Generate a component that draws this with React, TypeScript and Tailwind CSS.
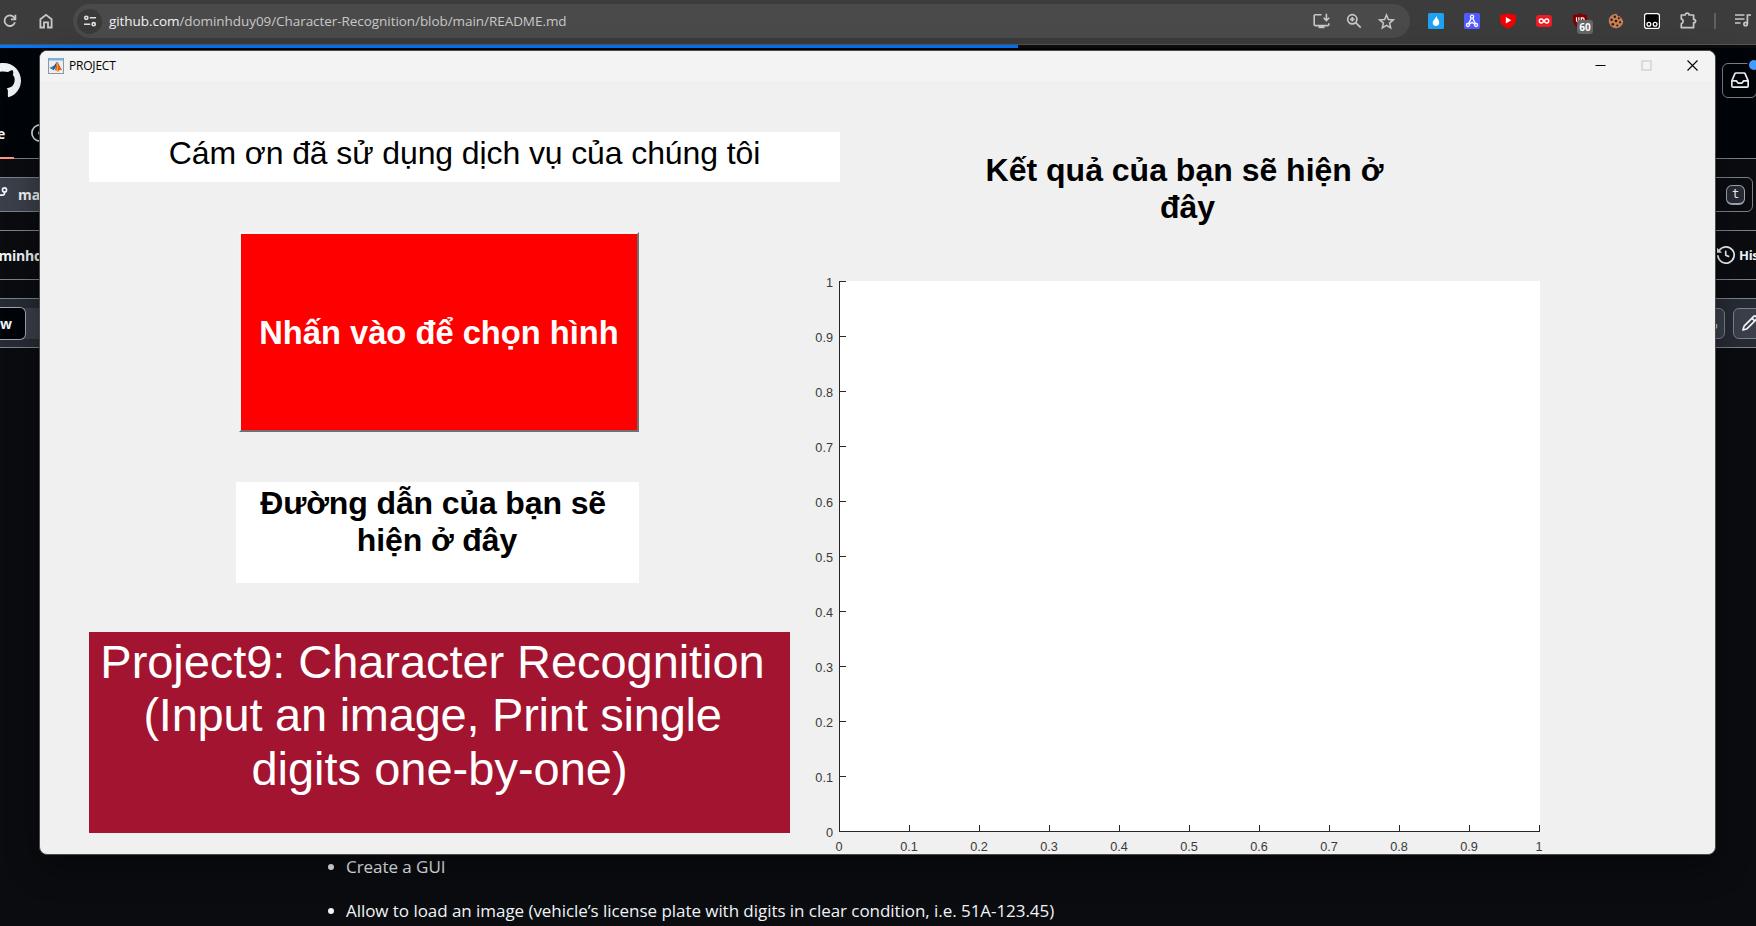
import React from "react";

const ui = "font-['Open_Sans','Noto_Sans',sans-serif]";
const arial = "font-['Liberation_Sans',Arial,sans-serif]";

function BrowserBar() {
  return (
    <header className={`flex h-[45px] items-start border-b border-[#555] bg-[#3c3c3c] text-[#c7c7c7] ${ui}`}>
      <svg className="mt-[13px] ml-[2px] h-4 w-4 shrink-0" viewBox="0 0 16 16" fill="none" stroke="currentColor" strokeWidth="1.8">
        <path d="M12.9 9.2A5.3 5.3 0 1 1 11.8 4.2L13 5.6" />
        <path d="M13.4 1.8v4.5H8.9" />
      </svg>
      <svg className="mt-[13px] ml-[20px] h-4 w-4 shrink-0" viewBox="0 0 16 16" fill="none" stroke="currentColor" strokeWidth="1.8">
        <path d="M2.4 6.2 8 1.8l5.6 4.4v8.3H10V9.4H6v5.1H2.4z" />
      </svg>
      <div className="mt-1 ml-[19px] flex h-[34px] w-[1337px] shrink-0 items-center rounded-full bg-[#4a4a4a] pl-1">
        <div className="flex h-[25px] w-[25px] items-center justify-center rounded-full bg-[#3a3a3a] text-[#e0e0e0]">
          <svg className="h-[14px] w-[14px]" viewBox="0 0 14 14" fill="none" stroke="currentColor" strokeWidth="1.6">
            <circle cx="3.3" cy="3.8" r="1.6" />
            <path d="M6.8 3.8H13M1 10.2h6.2" />
            <circle cx="10.7" cy="10.2" r="1.6" />
          </svg>
        </div>
        <div className="ml-[7px] text-[13.5px] leading-[20px] tracking-[-0.06px] whitespace-nowrap">
          <span className="text-[#f1f1f1]">github.com</span>/dominhduy09/Character-Recognition/blob/main/README.md
        </div>
        <div className="mr-[15px] ml-auto flex items-center gap-[16px]">
          <svg className="h-[17px] w-[17px]" viewBox="0 0 17 17" fill="none" stroke="currentColor" strokeWidth="1.6">
            <path d="M8.5 1.8H2.2a1 1 0 0 0-1 1v8.8a1 1 0 0 0 1 1h12.6a1 1 0 0 0 1-1V10.2" />
            <path d="M13.4.8v6M10.6 4.8l2.8 2.8 2.8-2.8" />
            <rect x="5.5" y="12.5" width="6" height="2.7" fill="currentColor" stroke="none" />
          </svg>
          <svg className="h-[16px] w-[16px]" viewBox="0 0 16 16" fill="none" stroke="currentColor" strokeWidth="1.7">
            <circle cx="6.3" cy="6.3" r="4.6" />
            <path d="m9.7 9.7 5 5M4 6.3h4.6M6.3 4v4.6" />
          </svg>
          <svg className="h-[17px] w-[17px]" viewBox="0 0 17 17" fill="none" stroke="currentColor" strokeWidth="1.5">
            <path d="m8.5 2 1.9 4.5 4.9.4-3.7 3.2 1.1 4.8-4.2-2.6-4.2 2.6 1.1-4.8L1.7 6.9l4.9-.4z" />
          </svg>
        </div>
      </div>
      <div className="mt-[13px] ml-[18px] flex h-4 shrink-0 items-start gap-[20px]">
        <svg className="h-4 w-4" viewBox="0 0 16 16">
          <rect width="16" height="16" rx="1.5" fill="#1da1f2" />
          <path d="M8.3 2.8c.3 2.3 2.9 3.9 2.9 6.8a3.2 3.2 0 0 1-6.5.2C4.7 7 7.9 6 8.3 2.8z" fill="#fff" />
        </svg>
        <svg className="h-4 w-4" viewBox="0 0 16 16" fill="none" stroke="#fff" strokeWidth="1.3">
          <rect width="16" height="16" rx="1.5" fill="#4f5bff" stroke="none" />
          <circle cx="8" cy="3.8" r="1.6" />
          <circle cx="3.9" cy="12" r="1.5" />
          <circle cx="12.1" cy="12" r="1.5" />
          <path d="M7.3 5.2 4.5 10.6M8.7 5.2l2.8 5.4M5.3 11.2 8 9.2l2.7 2" />
        </svg>
        <svg className="h-4 w-4" viewBox="0 0 16 16">
          <path d="M8 .3C5.5 1.5 3 1.7.2 1.7V7c0 4.300 3.800 6.500 7.800 9 4-2.500 7.800-4.700 7.800-9V1.700C13 1.700 10.500 1.500 8 .300z" fill="#f40000" />
          <path d="M5.800 4v6.600L11.300 7.300z" fill="#fff" />
        </svg>
        <svg className="h-4 w-4" viewBox="0 0 16 16" fill="none" stroke="#fff" strokeWidth="1.5">
          <rect y="2" width="16" height="12" rx="3" fill="#ed1c24" stroke="none" />
          <path d="M8 8C6.800 6.300 6.200 6 5.300 6a2 2 0 0 0 0 4C6.200 10 6.800 9.700 8 8s1.800-2 2.700-2a2 2 0 0 1 0 4C9.800 10 9.200 9.700 8 8z" />
        </svg>
        <div className="relative h-4 w-4">
          <svg className="h-4 w-4" viewBox="0 0 16 16">
            <path d="M8 0C6 1.500 4 1.800 1 1.800V7c0 4.500 3 6.500 7 9 4-2.500 7-4.500 7-9V1.800C12 1.800 10 1.500 8 0z" fill="#800000" />
            <path d="M4.500 4.300v3.200a1.200 1.200 0 0 0 2.400 0V4.300M9.300 9.500V4.800h1.300a1.300 1.300 0 0 1 0 3H9.300" fill="none" stroke="#fff" strokeWidth="1.2" />
          </svg>
          <span className="absolute top-[7px] left-[5px] flex h-[14px] w-[16px] items-center justify-center rounded-[3px] bg-[#666] text-[10px] leading-none font-bold text-white">60</span>
        </div>
        <svg className="h-4 w-4" viewBox="0 0 16 16">
          <path d="M8.500.700a7.300 7.300 0 1 0 6.800 7.800c-.6-.3-.6-1-.5-1.800-1-.2-1.300-.9-1-1.900-1.300.3-1.900-.4-1.700-1.500-1.500.3-3-.8-3.600-2.600z" fill="#c87f55" />
          <g fill="#2b1a12">
            <circle cx="6.8" cy="3.8" r="1.2" /><circle cx="3.6" cy="6.8" r="1.2" /><circle cx="8" cy="8" r="1.3" /><circle cx="4.8" cy="11.3" r="1.3" /><circle cx="9.3" cy="12.5" r="1.1" /><circle cx="12" cy="9.3" r="1.1" /><circle cx="10.8" cy="5.2" r="1" />
          </g>
        </svg>
        <svg className="h-4 w-4" viewBox="0 0 16 16">
          <rect x=".6" y=".6" width="14.8" height="14.8" rx="2.2" fill="#000" stroke="#fff" strokeWidth="1.2" />
          <circle cx="4.9" cy="11.3" r="1.9" fill="none" stroke="#fff" strokeWidth="1.3" />
          <circle cx="11.1" cy="11.3" r="1.9" fill="none" stroke="#fff" strokeWidth="1.3" />
        </svg>
        <svg className="-mt-px h-[17px] w-[17px]" viewBox="0 0 17 17" fill="none" stroke="currentColor" strokeWidth="1.7">
          <path d="M1.300 3h3.900c0-2.500 3.900-2.500 3.900 0h4.500v4.300c2.700 0 2.700 3.400 0 3.400v5H1.300v-3.900c2.500-1 2.500-3.900 0-4.900z" strokeLinejoin="round" />
        </svg>
      </div>
      <div className="mt-[13px] ml-[17px] h-4 w-[2px] shrink-0 bg-[#5f5f5f]" />
      <svg className="mt-[12px] ml-[19px] h-4 w-4 shrink-0" viewBox="0 0 16 16" fill="none" stroke="currentColor" strokeWidth="1.7">
        <path d="M0 3h9.500M0 7h9.500M0 11h5.500M12.400 12V3H16" />
        <circle cx="10.6" cy="12" r="1.7" />
      </svg>
    </header>
  );
}

function GithubPage() {
  return (
    <div className={`h-[881px] overflow-hidden bg-[#0a0c10] text-[14px] font-bold text-[#f0f3f6] ${ui}`}>
      <div className="h-[3px] w-[1018px] bg-[#0078ff]" />
      <div className="h-[111px] w-full border-b border-[#7a828e] bg-[#010409]">
        <div className="flex h-[64px] items-center justify-between">
          <svg className="-ml-[14px] h-[35px] w-[35px]" viewBox="0 0 16 16" fill="#f0f3f6">
            <path d="M8 0C3.580 0 0 3.580 0 8c0 3.540 2.290 6.530 5.470 7.590.4.070.550-.170.550-.380 0-.190-.010-.820-.010-1.490-2.010.370-2.530-.490-2.690-.940-.090-.230-.480-.940-.820-1.130-.280-.150-.680-.520-.010-.530.630-.010 1.080.580 1.230.820.720 1.210 1.870.870 2.330.660.070-.520.280-.870.510-1.070-1.780-.200-3.640-.890-3.640-3.950 0-.870.310-1.590.820-2.150-.080-.200-.360-1.020.080-2.120 0 0 .670-.210 2.200.820.640-.180 1.320-.270 2-.270s1.360.090 2 .270c1.530-1.040 2.200-.820 2.200-.820.440 1.100.160 1.920.080 2.120.510.560.820 1.270.820 2.150 0 3.070-1.870 3.750-3.650 3.950.290.250.540.730.540 1.480 0 1.070-.010 1.930-.010 2.200 0 .210.150.460.550.380A8.010 8.010 0 0 0 16 8c0-4.420-3.580-8-8-8z" />
          </svg>
          <div className="relative -mr-[1px] flex h-[35px] w-[35px] items-center justify-center rounded-md border border-[#7a828e]">
            <svg className="h-[18px] w-[18px]" viewBox="0 0 16 16" fill="#f0f3f6">
              <path d="M2.800 2.060A1.750 1.750 0 0 1 4.410 1h7.180c.7 0 1.333.417 1.610 1.060l2.740 6.395c.04.093.06.194.060.295v4.500A1.750 1.750 0 0 1 14.250 15H1.750A1.750 1.750 0 0 1 0 13.250v-4.500c0-.101.020-.202.060-.295Zm1.610.440a.25.25 0 0 0-.23.152L1.887 8H4.750a.75.75 0 0 1 .6.300L6.625 10h2.750l1.275-1.700a.75.75 0 0 1 .6-.300h2.863L11.820 2.652a.25.25 0 0 0-.23-.152Zm10.090 7h-2.875l-1.275 1.700a.75.75 0 0 1-.6.300h-3.500a.75.75 0 0 1-.6-.300L4.375 9.500H1.500v3.750c0 .138.112.25.25.25h12.500a.25.25 0 0 0 .25-.25Z" />
            </svg>
            <span className="absolute -top-[4px] -right-[3px] h-[10px] w-[10px] rounded-full bg-[#409eff] ring-2 ring-[#010409]" />
          </div>
        </div>
        <div className="flex h-[47px] items-stretch">
          <div className="flex w-[14px] items-start border-b-2 border-[#ff967d] pt-[10px] leading-[24px]"><span className="-ml-[3px]">e</span></div>
          <svg className="mt-[12px] ml-[17px] h-[18px] w-[18px]" viewBox="0 0 16 16" fill="none" stroke="#e0e3e6" strokeWidth="1.5">
            <circle cx="8" cy="8" r="7.2" />
            <circle cx="8" cy="8" r="1" fill="#f0f3f6" />
          </svg>
        </div>
      </div>
      <div className="mt-[18px] flex h-[35px] items-center justify-between">
        <div className="flex h-full w-[120px] items-center border-y border-[#7a828e] bg-[#3a3f49]">
          <svg className="-ml-[10px] h-[18px] w-[18px]" viewBox="0 0 16 16" fill="none" stroke="#f0f3f6" strokeWidth="1.5">
            <circle cx="12.9" cy="3.5" r="1.8" />
            <path d="M12.900 5.300v1c0 1-.8 1.800-1.800 1.800H5" />
          </svg>
          <span className="ml-[10px]">main</span>
        </div>
        <div className="mr-[3px] flex h-full w-[200px] items-center justify-end rounded-md border border-[#7a828e] pr-[7px]">
          <kbd className="flex h-[20px] w-[19px] items-center justify-center rounded-md border border-b-2 border-[#9ea7b3] bg-[#272b33] text-[12px] font-normal font-['DejaVu_Sans_Mono',monospace]">t</kbd>
        </div>
      </div>
      <div className="mt-[18px] flex h-[50px] items-center justify-between border-y border-[#7a828e]">
        <span className="-ml-[10px] text-[14px] tracking-[-0.2px]">ominhduy09</span>
        <div className="-mr-[29px] flex items-center gap-[4px]">
          <svg className="h-[18px] w-[18px]" viewBox="0 0 16 16" fill="#f0f3f6">
            <path d="m.427 1.927 1.215 1.215a8.002 8.002 0 1 1-1.600 5.685.75.75 0 1 1 1.493-.154 6.500 6.500 0 1 0 1.180-4.458l1.358 1.358A.25.25 0 0 1 3.896 6H.25A.25.25 0 0 1 0 5.750V2.104a.25.25 0 0 1 .427-.177ZM7.750 4a.75.75 0 0 1 .75.75v2.992l2.028.812a.75.75 0 0 1-.557 1.392l-2.500-1A.751.751 0 0 1 7 8.250v-3.500A.75.75 0 0 1 7.750 4Z" />
          </svg>
          <span className="w-[46px] pt-px text-[13px] tracking-[-0.3px]">History</span>
        </div>
      </div>
      <div className="mt-[18px] flex h-[50px] items-center justify-between border-y border-[#7a828e] bg-[#272b33]">
        <div className="flex h-[31px] w-[100px] items-center bg-[#3a3f49]">
          <div className="-my-px flex h-[33px] w-[26px] items-center rounded-r-md border border-l-0 border-[#9ea7b3] bg-[#010409]">w</div>
        </div>
        <div className="-mr-[11px] flex gap-2">
          <div className="flex h-[31px] w-[35px] items-center justify-end rounded-md border border-[#7a828e] bg-[#3a3f49] pr-[6px]">
            <svg className="h-4 w-4" viewBox="0 0 16 16" fill="none" stroke="#c0c4c8" strokeWidth="1.5"><path d="M2 9v3.200a1 1 0 0 0 1 1h10.500a1 1 0 0 0 1-1V9M8 1v8" /></svg>
          </div>
          <div className="flex h-[31px] w-[34px] items-center justify-center rounded-md border border-[#7a828e] bg-[#3a3f49]">
            <svg className="h-[18px] w-[18px]" viewBox="0 0 16 16" fill="#f0f3f6">
              <path d="M11.013 1.427a1.750 1.750 0 0 1 2.474 0l1.086 1.086a1.750 1.750 0 0 1 0 2.474l-8.610 8.610c-.21.210-.47.364-.756.445l-3.251.930a.75.75 0 0 1-.927-.928l.929-3.250c.081-.286.235-.547.445-.758l8.610-8.610Zm.176 4.823L9.750 4.810l-6.286 6.287a.253.253 0 0 0-.064.108l-.558 1.953 1.953-.558a.253.253 0 0 0 .108-.064Zm1.238-3.763a.25.25 0 0 0-.354 0L10.811 3.750l1.439 1.440 1.263-1.263a.25.25 0 0 0 0-.354Z" />
            </svg>
          </div>
        </div>
      </div>
      <ul className="mt-[505px] ml-[328px] flex flex-col gap-[16px] text-[17px] leading-[28px] font-normal tracking-[-0.05px]">
        <li className="flex items-center gap-[12px]"><span className="h-[6px] w-[6px] rounded-full bg-current" /><span>Create a GUI</span></li>
        <li className="flex items-center gap-[12px]"><span className="h-[6px] w-[6px] rounded-full bg-current" /><span className="whitespace-nowrap">Allow to load an image (vehicle’s license plate with digits in clear condition, i.e. 51A-123.45)</span></li>
      </ul>
    </div>
  );
}

function TitleBar() {
  return (
    <div className={`flex h-[30px] items-center bg-[#f3f3f3] text-black ${ui}`}>
      <svg className="-mt-px ml-[8px] h-4 w-4" viewBox="0 0 16 16">
        <rect x=".5" y=".5" width="15" height="15" fill="#e9eef2" stroke="#8e979e" />
        <rect x="1" y="0" width="14" height="2.5" fill="#7fb0dc" />
        <path d="m1.500 9.800 4-1.800 2 1.600-2.300 2.700z" fill="#3b7bbf" />
        <path d="M5.500 8c1.500-.4 2.300-3.500 3.500-4.200L7.500 9.600 5.200 12.300z" fill="#26507e" />
        <path d="M9 3.800c1.500.2 2.800 5.800 5.300 8.500-1.800-1-3.300-.6-4.300 1.700-.9-1.500-1.700-2-3.400-1.500C8 10.500 8.200 6 9 3.800z" fill="#d9501e" />
        <path d="M9 3.800c-.2 3 .1 7-.7 8.600l1.700 1.600c.7-3 .2-8-1-10.200z" fill="#f5a623" />
      </svg>
      <span className="ml-[5px] text-[12px] tracking-[-0.2px]">PROJECT</span>
      <div className="-mt-[2px] mr-[17px] ml-auto flex items-center gap-[35px]">
        <svg className="h-[11px] w-[11px]" viewBox="0 0 11 11"><rect x=".5" y="5" width="10" height="1" fill="#000" /></svg>
        <svg className="h-[11px] w-[11px]" viewBox="0 0 11 11"><rect x="1" y="1" width="9" height="9" fill="none" stroke="#c4c4c4" /></svg>
        <svg className="h-[11px] w-[11px]" viewBox="0 0 11 11" stroke="#000" strokeWidth="1.1"><path d="m.5.5 10 10M10.5.5l-10 10" /></svg>
      </div>
    </div>
  );
}

const ticks = [0, 1, 2, 3, 4, 5, 6, 7, 8, 9, 10];
const tickLabel = (i: number) => (i === 0 ? "0" : i === 10 ? "1" : `0.${i}`);

function Axes() {
  return (
    <svg className="-ml-[32px] h-[583px] w-[760px] shrink-0" viewBox="808 271 760 583" fontFamily="Liberation Sans, Arial, sans-serif" fontSize="12.7" fill="#3a3a3a">
      <rect x="840" y="281" width="700" height="551" fill="#fff" />
      <g fill="#262626" shapeRendering="crispEdges">
        <rect x="839" y="281" width="1" height="551" />
        <rect x="839" y="831" width="701" height="1" />
        {ticks.map((i) => (
          <React.Fragment key={i}>
            <rect x={839 + 70 * i} y="825" width="1" height="7" />
            <rect x="839" y={831 - 55 * i} width="7" height="1" />
          </React.Fragment>
        ))}
      </g>
      {ticks.map((i) => (
        <React.Fragment key={i}>
          <text x={839 + 70 * i} y="851" textAnchor="middle">{tickLabel(i)}</text>
          <text x="833" y={837 - 55 * i} textAnchor="end">{tickLabel(i)}</text>
        </React.Fragment>
      ))}
    </svg>
  );
}

function ProjectWindow() {
  return (
    <section className="absolute top-[50px] left-[39px] flex h-[805px] w-[1677px] flex-col overflow-hidden rounded-[8px] border border-[#4a4a4a] bg-[#f0f0f0] shadow-[0_12px_32px_rgba(0,0,0,0.4)]">
      <TitleBar />
      <div className={`flex flex-1 text-[32px] leading-[37px] text-black ${arial}`}>
        <div className="ml-[49px] flex w-[751px] shrink-0 flex-col pt-[51px]">
          <div className="h-[50px] bg-white pt-[3px] text-center tracking-[-0.11px]">Cám ơn đã sử dụng dịch vụ của chúng tôi</div>
          <button className="mt-[50px] ml-[150px] h-[200px] w-[400px] border-t-2 border-r-2 border-b-2 border-l-2 border-t-[#f4f4f4] border-r-[#707070] border-b-[#707070] border-l-[#f4f4f4] bg-[#ff0000] text-[32.7px] font-bold whitespace-nowrap text-white">Nhấn vào để chọn hình</button>
          <div className="mt-[50px] ml-[147px] h-[101px] w-[403px] bg-white pt-[3px] text-center font-bold tracking-[-0.12px]">
            <div>Đường dẫn của bạn sẽ&nbsp;</div>
            <div className="pr-px">hiện ở đây</div>
          </div>
          <div className="mt-[49px] h-[201px] w-[701px] bg-[#a2142f] pt-[3px] text-center text-[47px] leading-[53.3px] whitespace-nowrap text-white">
            <div className="pr-px tracking-[-0.06px]">Project9: Character Recognition&nbsp;</div>
            <div className="pr-px tracking-[-0.24px]">(Input an image, Print single&nbsp;</div>
            <div>digits one-by-one)</div>
          </div>
        </div>
        <div className="flex flex-col">
          <div className="mt-[71px] ml-[99px] h-[119px] w-[500px] text-center font-bold whitespace-nowrap">
            <div>Kết quả của bạn sẽ hiện ở&nbsp;</div>
            <div className="pr-[3px]">đây</div>
          </div>
          <Axes />
        </div>
      </div>
    </section>
  );
}

export default function App() {
  return (
    <main className="relative h-[926px] w-[1756px] overflow-hidden">
      <BrowserBar />
      <GithubPage />
      <ProjectWindow />
    </main>
  );
}
